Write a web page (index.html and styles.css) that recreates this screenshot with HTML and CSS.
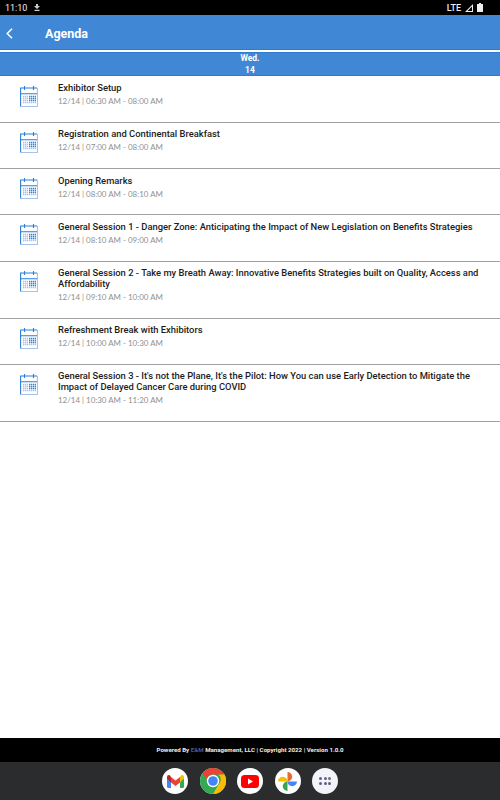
FILE: index.html
```html
<!DOCTYPE html>
<html lang="en">
<head>
    <meta charset="UTF-8">
    <title>Agenda</title>
    <link rel="stylesheet" href="styles.css">
</head>
<body>
<svg class="sprite" width="0" height="0">
    <symbol id="cal" viewBox="0 0 18 21">
        <rect x=".5" y="2" width="17" height="18.5" fill="#fff"/>
        <path d="M17.500 2v18.500H1" fill="none" stroke="#a5c3ec" stroke-width="1.2"/>
        <path d="M.6 20.500V2h16.500M.6 7.800h16.500" fill="none" stroke="#2a7fd8" stroke-width="1.1"/>
        <path d="M4.500 0v4M13.500 0v4" stroke="#2a7fd8" stroke-width="1.1"/>
        <path d="M3 10.500h5M3 12.500h5M3 14.500h5M3 16.500h13" stroke="#a9c2e8" stroke-width="1.5" stroke-dasharray="1.4 .6"/>
        <path d="M9 10.500h7M9 12.500h7M9 14.500h7" stroke="#2f83dd" stroke-width="1.5" stroke-dasharray="1.4 .6"/>
    </symbol>
</svg>
<div class="status-bar">
    <span class="clock">11:10</span>
    <svg width="6" height="7" viewBox="0 0 6 7"><path d="M2 0h2v2h2L3 5 0 2h2zM.5 5.800h5V7h-5z" fill="#ccc"/></svg>
    <span class="spacer"></span>
    <div class="sys-icons">
        <span class="lte">LTE</span>
        <svg width="8" height="8" viewBox="0 0 8 8"><path d="M8 0v8H0zM7 2.500 2.500 7H7z" fill="#eee" fill-rule="evenodd"/></svg>
        <svg width="6" height="9" viewBox="0 0 6 9"><path d="M2 0h2v1h2v8H0V1h2z" fill="#eee"/></svg>
    </div>
</div>
<header class="app-bar">
    <svg width="7" height="11" viewBox="0 0 7 11"><path d="M6 .7 1.200 5.500 6 10.300" fill="none" stroke="#fff" stroke-width="1.5"/></svg>
    <h1>Agenda</h1>
</header>
<div class="day-tab">
    <div>Wed.</div>
    <div>14</div>
</div>
<ul class="agenda">
    <li>
        <svg class="cal"><use href="#cal"/></svg>
        <div>
            <div class="title">Exhibitor Setup</div>
            <div class="when">12/14 | 06:30 AM - 08:00 AM</div>
        </div>
    </li>
    <li>
        <svg class="cal"><use href="#cal"/></svg>
        <div>
            <div class="title">Registration and Continental Breakfast</div>
            <div class="when">12/14 | 07:00 AM - 08:00 AM</div>
        </div>
    </li>
    <li>
        <svg class="cal"><use href="#cal"/></svg>
        <div>
            <div class="title">Opening Remarks</div>
            <div class="when">12/14 | 08:00 AM - 08:10 AM</div>
        </div>
    </li>
    <li>
        <svg class="cal"><use href="#cal"/></svg>
        <div>
            <div class="title">General Session 1 - Danger Zone: Anticipating the Impact of New Legislation on Benefits Strategies</div>
            <div class="when">12/14 | 08:10 AM - 09:00 AM</div>
        </div>
    </li>
    <li>
        <svg class="cal"><use href="#cal"/></svg>
        <div>
            <div class="title">General Session 2 - Take my Breath Away: Innovative Benefits Strategies built on Quality, Access and Affordability</div>
            <div class="when">12/14 | 09:10 AM - 10:00 AM</div>
        </div>
    </li>
    <li>
        <svg class="cal"><use href="#cal"/></svg>
        <div>
            <div class="title">Refreshment Break with Exhibitors</div>
            <div class="when">12/14 | 10:00 AM - 10:30 AM</div>
        </div>
    </li>
    <li>
        <svg class="cal"><use href="#cal"/></svg>
        <div>
            <div class="title">General Session 3 - It's not the Plane, It's the Pilot: How You can use Early Detection to Mitigate the Impact of Delayed Cancer Care during COVID</div>
            <div class="when">12/14 | 10:30 AM - 11:20 AM</div>
        </div>
    </li>
</ul>
<footer class="powered">Powered By <span class="brand">E&amp;M</span> Management, LLC | Copyright 2022 | Version 1.0.0</footer>
<nav class="dock">
    <div class="app">
        <svg width="17" height="13" viewBox="0 0 17 13">
            <path d="M0 2v9.500Q0 13 1.500 13H4V4z" fill="#4285f4"/>
            <path d="M17 2v9.500q0 1.500-1.500 1.500H13V4z" fill="#34a853"/>
            <path d="M4 7.500V2L8.500 5.500 13 2v5.500l-4.500 3.500z" fill="#ea4335"/>
            <path d="M0 3.500V2Q0 0 2 0h.5L4 2v5.500z" fill="#c5221f"/>
            <path d="M17 3.500V2q0-2-2-2h-.5L13 2v5.500z" fill="#fbbc04"/>
        </svg>
    </div>
    <div class="app">
        <svg width="26" height="26" viewBox="0 0 26 26">
            <circle cx="13" cy="13" r="13" fill="#34a853"/>
            <path d="M13 0a13 13 0 0 1 11.300 6.500H13a6.500 6.500 0 0 0-6.200 4.500L2.200 5.800A13 13 0 0 1 13 0z" fill="#ea4335"/>
            <path d="M24.300 6.500A13 13 0 0 1 13 26l5.700-9.800a6.500 6.500 0 0 0-.2-9.700z" fill="#fbbc04"/>
            <circle cx="13" cy="13" r="6.200" fill="#fff"/>
            <circle cx="13" cy="13" r="4.800" fill="#4285f4"/>
        </svg>
    </div>
    <div class="app">
        <svg width="18" height="13" viewBox="0 0 18 13">
            <rect width="18" height="13" rx="3.500" fill="#f00"/>
            <path d="M7 3.500v6l5-3z" fill="#fff"/>
        </svg>
    </div>
    <div class="app">
        <svg width="19" height="19" viewBox="0 0 20 20">
            <path d="M0 10a5 5 0 0 1 10 0z" fill="#fbbc04"/>
            <path d="M10 0a5 5 0 0 1 0 10z" fill="#ea6a35"/>
            <path d="M20 10a5 5 0 0 1-10 0z" fill="#4285f4"/>
            <path d="M10 20a5 5 0 0 1 0-10z" fill="#34a853"/>
        </svg>
    </div>
    <div class="app apps">
        <i></i><i></i><i class="tint"></i><i></i><i></i><i></i>
    </div>
</nav>
</body>
</html>
```

FILE: styles.css
```css
* {
    box-sizing: border-box;
}
body {
    margin: 0;
    height: 800px;
    display: flex;
    flex-direction: column;
    font-family: Roboto, sans-serif;
    background-color: white;
    overflow: hidden;
}
.sprite {
    position: absolute;
}
.status-bar {
    height: 15px;
    flex-shrink: 0;
    background-color: black;
    color: #eee;
    display: flex;
    align-items: center;
    gap: 7px;
    padding: 0 17px 0 5px;
}
.status-bar .clock {
    font-size: 9px;
}
.status-bar .spacer {
    flex-grow: 1;
}
.sys-icons {
    display: flex;
    align-items: center;
    gap: 4px;
}
.status-bar .lte {
    font-weight: 500;
    font-size: 9px;
}
.app-bar {
    height: 37px;
    flex-shrink: 0;
    background-color: #4088d5;
    border-bottom: 2px solid white;
    box-shadow: inset 0 -1px 0 #2f7cce;
    display: flex;
    align-items: center;
    gap: 32px;
    padding: 1px 6px 0;
}
.app-bar h1 {
    margin: 0;
    color: white;
    font-size: 12.5px;
    font-weight: 700;
}
.day-tab {
    height: 24px;
    flex-shrink: 0;
    background-color: #4088d5;
    border-top: 1px solid #2f7cce;
    border-bottom: 1px solid #2f7cce;
    color: white;
    font-size: 8.5px;
    font-weight: 700;
    line-height: 11.5px;
    text-align: center;
}
.agenda {
    list-style: none;
    margin: 0;
    padding: 0.6px 0 0;
    flex-grow: 1;
}
.agenda li {
    display: flex;
    gap: 20px;
    padding: 6.4px 20px 14.8px 20px;
    border-bottom: 1px solid #a0a0a0;
}
.cal {
    width: 18px;
    height: 21px;
    flex-shrink: 0;
    margin-top: 2.6px;
}
.title {
    font-size: 9.4px;
    font-weight: 500;
    line-height: 10.8px;
    color: #1c1c1c;
}
.when {
    font-family: Lato, sans-serif;
    font-size: 7.95px;
    line-height: 11px;
    color: #909090;
    margin-top: 2.3px;
}
.powered {
    height: 24px;
    flex-shrink: 0;
    background-color: black;
    color: #eee;
    font-size: 6.15px;
    font-weight: 700;
    line-height: 24px;
    text-align: center;
}
.brand {
    color: #4a5a9a;
}
.dock {
    height: 38px;
    flex-shrink: 0;
    background-color: #2b2c2e;
    display: flex;
    justify-content: center;
    gap: 11.5px;
    padding-top: 6px;
}
.app {
    width: 26px;
    height: 26px;
    border-radius: 50%;
    background-color: white;
    display: flex;
    align-items: center;
    justify-content: center;
}
.apps {
    display: grid;
    grid-template-columns: repeat(3, 3px);
    gap: 2px 1.5px;
    align-content: center;
    justify-content: center;
    background-color: #f3f3fa;
}
.apps i {
    width: 3px;
    height: 3px;
    border-radius: 50%;
    background-color: #5f6088;
}
.apps .tint {
    background-color: #8a5f88;
}
```
